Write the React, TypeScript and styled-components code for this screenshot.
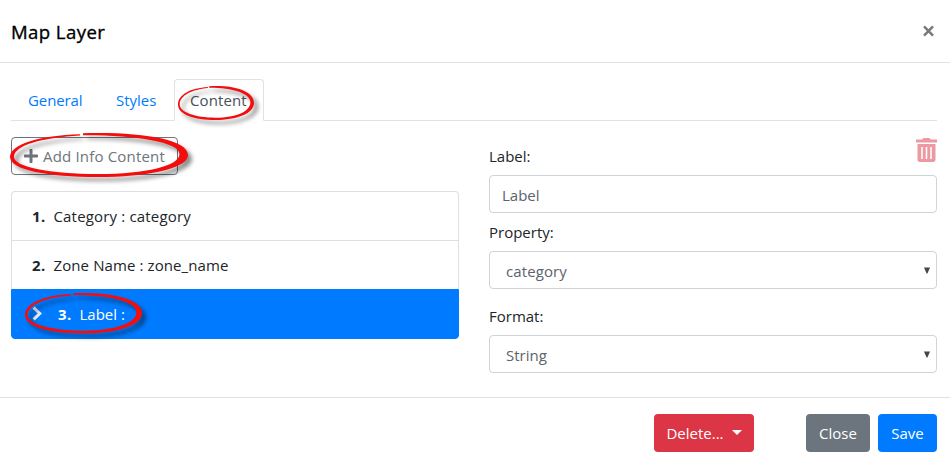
import React from "react";
import styled, { createGlobalStyle } from "styled-components";
import { FaPlus } from "react-icons/fa";

const GlobalStyle = createGlobalStyle`
  *, *::before, *::after { box-sizing: border-box; }
  body {
    margin: 0;
    background: #fff;
    color: #212529;
    font: 400 15px/24px "Open Sans", "Noto Sans", sans-serif;
  }
`;

const Modal = styled.div`
  display: flex;
  flex-direction: column;
  height: 466px;
  overflow: hidden;
`;

const Header = styled.header`
  display: flex;
  align-items: center;
  justify-content: space-between;
  height: 63px;
  padding: 0 16px 0 11px;
  border-bottom: 1px solid #dee2e6;
`;

const Title = styled.h5`
  margin: 0;
  padding-top: 1px;
  color: #000;
  font-size: 18.6px;
  font-weight: 500;
  letter-spacing: 0.4px;
  -webkit-text-stroke: 0.35px #000;
`;

const CloseIcon = styled.button`
  display: flex;
  padding: 0;
  border: 0;
  background: none;
  color: #7a7a7a;
`;

const Tabs = styled.nav`
  display: flex;
  height: 42px;
  margin: 16px 13px 0 11px;
  border-bottom: 1px solid #dee2e6;
`;

const Tab = styled.a<{ $width: number; $active?: boolean }>`
  position: relative;
  width: ${(p) => p.$width}px;
  height: 42px;
  padding: 8px 0 0 ${(p) => (p.$active ? 15 : 16)}px;
  border: 1px solid;
  border-color: ${(p) => (p.$active ? "#dee2e6 #dee2e6 #fff" : "transparent")};
  border-radius: 4px 4px 0 0;
  background: ${(p) => (p.$active ? "#fff" : "none")};
  color: ${(p) => (p.$active ? "#495057" : "#007bff")};
`;

const Body = styled.main`
  display: grid;
  grid-template-columns: 448px 448px;
  column-gap: 30px;
  height: 276px;
  padding: 16px 0 0 11px;
`;

const AddButton = styled.button`
  position: relative;
  display: flex;
  align-items: center;
  gap: 4px;
  width: 167px;
  height: 38px;
  padding: 0 0 1px 11px;
  border: 1px solid #6c757d;
  border-radius: 4px;
  background: #fff;
  color: #6c757d;
  font: inherit;
  white-space: nowrap;
`;

const List = styled.ol`
  margin: 16px 0 0;
  padding: 0;
  list-style: none;
`;

const Item = styled.li<{ $active?: boolean }>`
  position: relative;
  display: flex;
  align-items: center;
  height: ${(p) => (p.$active ? 50 : 49)}px;
  padding: 0 20px 1px;
  border: 1px solid ${(p) => (p.$active ? "#007bff" : "#dfdfdf")};
  border-bottom-width: ${(p) => (p.$active ? 1 : 0)}px;
  background: ${(p) => (p.$active ? "#007bff" : "#fff")};
  color: ${(p) => (p.$active ? "#fff" : "#212529")};
  &:first-child { border-radius: 4px 4px 0 0; }
  &:last-child { border-radius: 0 0 4px 4px; }
`;

const Marker = styled.span`
  display: flex;
  width: 26px;
`;

const Index = styled.b`
  width: 21.5px;
  font-weight: 700;
  letter-spacing: 0.3px;
`;

const Text = styled.span<{ $spacing?: number }>`
  letter-spacing: ${(p) => p.$spacing ?? 0}px;
  white-space: pre;
`;

const Form = styled.form`
  display: flex;
  flex-direction: column;
`;

const LabelRow = styled.div<{ $height: number; $top: number }>`
  display: flex;
  justify-content: space-between;
  height: ${(p) => p.$height}px;
  padding-top: ${(p) => p.$top}px;
`;

const Trash = styled.svg`
  margin-top: -6px;
  opacity: 0.5;
`;

const Field = styled.div<{ $indent: number }>`
  display: flex;
  align-items: center;
  justify-content: space-between;
  height: 38px;
  padding: 2px 6px 0 ${(p) => p.$indent}px;
  border: 1px solid #ced4da;
  border-radius: 4px;
  color: #5b636b;
`;

const Arrow = styled.svg`
  margin-top: -2px;
`;

const Footer = styled.footer`
  display: flex;
  justify-content: flex-end;
  gap: 8px;
  padding: 16px 13px 0 0;
  border-top: 1px solid #dee2e6;
`;

const Button = styled.button<{ $color: string; $width: number; $gapAfter?: number }>`
  display: flex;
  align-items: center;
  justify-content: center;
  gap: 8px;
  width: ${(p) => p.$width}px;
  height: 38px;
  margin-right: ${(p) => p.$gapAfter ?? 0}px;
  padding: 0 0 1px;
  border: 0;
  border-radius: 4px;
  background: ${(p) => p.$color};
  color: #fff;
  font: inherit;
`;

const Caret = styled.span`
  margin-top: -1px;
  border: 5px solid transparent;
  border-top-color: #fff;
  border-bottom: 0;
`;

const Ring = styled.svg<{ $x: number; $y: number; $w: number; $h: number }>`
  position: absolute;
  z-index: 2;
  left: ${(p) => p.$x}px;
  top: ${(p) => p.$y}px;
  width: ${(p) => p.$w}px;
  height: ${(p) => p.$h}px;
  overflow: visible;
  pointer-events: none;
  filter: drop-shadow(4px 4px 2px rgba(0, 0, 0, 0.45));
`;

/* Hand-drawn marker ring: hairline at the upper left, heaviest on the right. */
function MarkerRing(props: { x: number; y: number; w: number; h: number }) {
  return (
    <Ring $x={props.x} $y={props.y} $w={props.w} $h={props.h} viewBox="0 0 178 44" preserveAspectRatio="none">
      <path
        fill="#f40d0d"
        d="M73 .2C130-1.5 178 6 178 22C178 36 136 44 88 44C38 44 0 37 0 24C0 11 30 2.5 70 1.2L70 2.6C34 4.5 4 12 4 24C4 34 40 41 88 41C136 41 169.5 33 169.5 21C169.5 9 124 2 73 2.3Z"
      />
    </Ring>
  );
}

function SelectArrow() {
  return (
    <Arrow width="6" height="7" viewBox="0 0 6 7">
      <path d="M0 .5H6L3.4 6.5H2.6Z" fill="#40474e" />
    </Arrow>
  );
}

function TrashIcon() {
  return (
    <Trash width="21" height="24" viewBox="0 0 21 24" fill="#dc3545">
      <path d="M.6 1.5H6.2L7 .4Q7.2 0 7.8 0H13.2Q13.8 0 14 .4L14.8 1.5H20.4Q21 1.5 21 2.1V3.9Q21 4.5 20.4 4.5H.6Q0 4.5 0 3.9V2.1Q0 1.5 .6 1.5Z" />
      <path
        fillRule="evenodd"
        d="M1.5 6H19.5V21.8Q19.5 24 17.3 24H3.7Q1.5 24 1.5 21.8ZM5.2 9V21H6.8V9ZM9.7 9V21H11.3V9ZM14.2 9V21H15.8V9Z"
      />
    </Trash>
  );
}

export default function App() {
  return (
    <>
      <GlobalStyle />
      <Modal>
        <Header>
          <Title>Map Layer</Title>
          <CloseIcon aria-label="Close">
            <svg width="11" height="12" viewBox="0 0 11 12">
              <path d="M1 1.3L10 10.7M10 1.3L1 10.7" stroke="currentColor" strokeWidth="2.5" />
            </svg>
          </CloseIcon>
        </Header>
        <Tabs>
          <Tab $width={88}><Text $spacing={-0.1}>General</Text></Tab>
          <Tab $width={75}><Text>Styles</Text></Tab>
          <Tab $width={90} $active>
            <Text $spacing={0.1}>Content</Text>
            <MarkerRing x={3} y={5.5} w={76} h={34} />
          </Tab>
        </Tabs>
        <Body>
          <section>
            <AddButton>
              <FaPlus size={16} />
              <Text $spacing={0.18}>Add Info Content</Text>
              <MarkerRing x={-2} y={-5} w={178} h={44} />
            </AddButton>
            <List>
              <Item><Index>1.</Index><Text $spacing={0.17}>Category : category</Text></Item>
              <Item><Index>2.</Index><Text $spacing={0.1}>Zone Name : zone_name</Text></Item>
              <Item $active>
                <Marker>
                  <svg width="10" height="15" viewBox="0 0 10 15" fill="none">
                    <path d="M1.6 1.6L7.8 7.5L1.6 13.4" stroke="#e9ecef" strokeWidth="3" />
                  </svg>
                </Marker>
                <Index>3.</Index><Text>Label :</Text>
                <MarkerRing x={13} y={2.5} w={117} h={40.5} />
              </Item>
            </List>
          </section>
          <Form>
            <LabelRow $height={38} $top={7}>
              <Text>Label:</Text>
              <TrashIcon />
            </LabelRow>
            <Field $indent={12}><Text>Label</Text></Field>
            <LabelRow $height={38} $top={7}><Text>Property:</Text></LabelRow>
            <Field $indent={16}><Text $spacing={0.1}>category</Text><SelectArrow /></Field>
            <LabelRow $height={46} $top={15}><Text>Format:</Text></LabelRow>
            <Field $indent={16}><Text>String</Text><SelectArrow /></Field>
          </Form>
        </Body>
        <Footer>
          <Button $color="#dc3545" $width={100} $gapAfter={44}><Text>Delete...</Text><Caret /></Button>
          <Button $color="#6c757d" $width={64}><Text>Close</Text></Button>
          <Button $color="#007bff" $width={59}><Text>Save</Text></Button>
        </Footer>
      </Modal>
    </>
  );
}
